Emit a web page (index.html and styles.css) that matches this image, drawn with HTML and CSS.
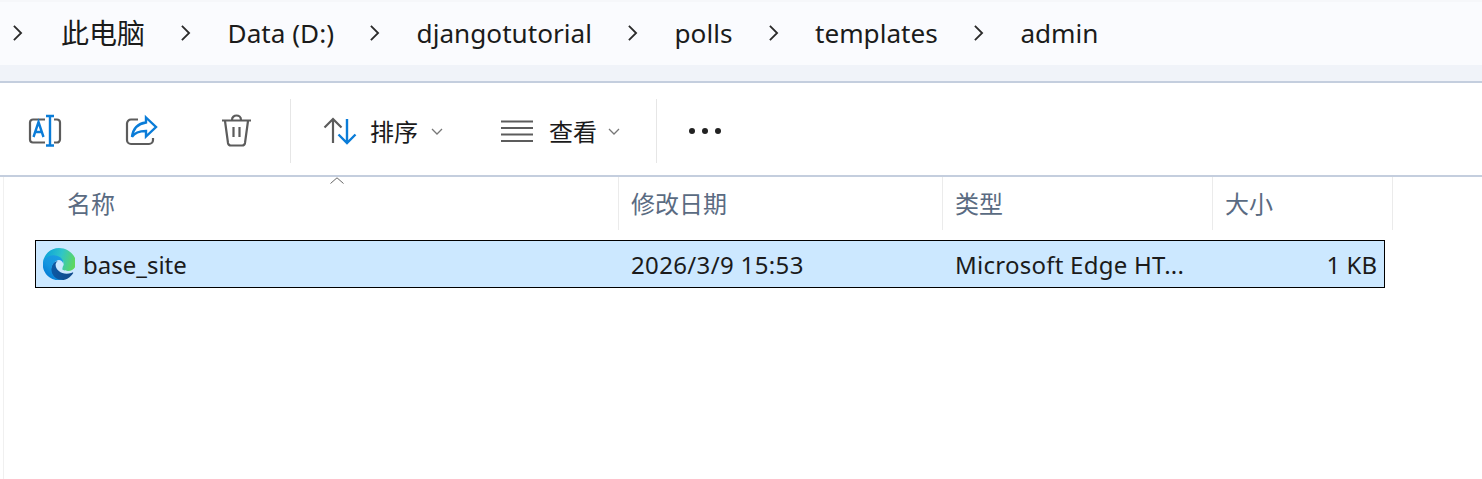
FILE: index.html
```html
<!DOCTYPE html>
<html lang="zh-CN">
<head>
  <meta charset="UTF-8" />
  <title>admin</title>
  <link rel="stylesheet" href="styles.css">
</head>
<body>
  <nav class="address-bar">
    <svg class="crumb-arrow" viewBox="0 0 12 20"><path d="M2 2l8 8-8 8"/></svg>
    <span class="crumb crumb-cn">此电脑</span>
    <svg class="crumb-arrow" viewBox="0 0 12 20"><path d="M2 2l8 8-8 8"/></svg>
    <span class="crumb">Data (D:)</span>
    <svg class="crumb-arrow" viewBox="0 0 12 20"><path d="M2 2l8 8-8 8"/></svg>
    <span class="crumb">djangotutorial</span>
    <svg class="crumb-arrow" viewBox="0 0 12 20"><path d="M2 2l8 8-8 8"/></svg>
    <span class="crumb">polls</span>
    <svg class="crumb-arrow" viewBox="0 0 12 20"><path d="M2 2l8 8-8 8"/></svg>
    <span class="crumb">templates</span>
    <svg class="crumb-arrow" viewBox="0 0 12 20"><path d="M2 2l8 8-8 8"/></svg>
    <span class="crumb">admin</span>
  </nav>
  <div class="bar-strip"></div>

  <div class="toolbar">
    <div class="tool-group">
      <svg class="icon" viewBox="0 0 32 32" fill="none">
        <path class="grey" d="M16 4.500H4a3 3 0 0 0-3 3v17a3 3 0 0 0 3 3h12M25 4.500h3a3 3 0 0 1 3 3v17a3 3 0 0 1-3 3h-3"/>
        <path class="blue" d="M21 1v29M17 1h8M17 30.500h8M4.500 22l5-15 5 15M6.300 17h6.400"/>
      </svg>
      <svg class="icon" viewBox="0 0 32 32" fill="none">
        <path class="grey" d="M13 4.500H6A4 4 0 0 0 2 8.500v16.500a4 4 0 0 0 4 4h18a4 4 0 0 0 4-4v-2"/>
        <path class="blue" d="M21 2.500L31 12l-10 9.500v-5.500c-6 0-11 1-14 6 1-8 6-13.500 14-14.500z"/>
      </svg>
      <svg class="icon" viewBox="0 0 32 32" fill="none">
        <path class="grey" d="M1 5.500h29M11 5c0-6 9-6 9 0M4 6l3 22a3 3 0 0 0 3 2.500h11a3 3 0 0 0 3-2.500l3-22M12.500 12v10M18.500 12v10"/>
      </svg>
    </div>
    <div class="tool-sep"></div>
    <div class="tool-menu">
      <svg class="icon" viewBox="0 0 32 32" fill="none">
        <path class="grey" d="M9 4v24M0.500 12.500L9 4l8.500 8.500"/>
        <path class="blue" d="M23 4v24M14.500 19.500L23 28l8.500-8.500"/>
      </svg>
      <span class="tool-label">排序</span>
      <svg class="menu-caret" viewBox="0 0 12 7"><path d="M1 1l5 5 5-5"/></svg>
    </div>
    <div class="tool-menu">
      <svg class="icon" viewBox="0 0 32 32" fill="none">
        <path class="grey" d="M0 6.500h32M0 13h32M0 19.500h32M0 26h32"/>
      </svg>
      <span class="tool-label">查看</span>
      <svg class="menu-caret" viewBox="0 0 12 7"><path d="M1 1l5 5 5-5"/></svg>
    </div>
    <div class="tool-sep tool-sep-2"></div>
    <div class="more-dots"><i></i><i></i><i></i></div>
  </div>

  <main class="file-pane">
    <svg class="sort-mark" viewBox="0 0 14 7"><path d="M0.500 6.500L7 0.800l6.500 5.700"/></svg>
    <div class="col-head">
      <div class="head-cell head-name">名称</div>
      <div class="head-cell">修改日期</div>
      <div class="head-cell">类型</div>
      <div class="head-cell">大小</div>
    </div>
    <div class="file-row">
      <div class="file-name">
        <svg class="edge" viewBox="0 0 256 256">
          <defs>
            <linearGradient id="e1" x1="63" y1="180" x2="241" y2="180" gradientUnits="userSpaceOnUse">
              <stop offset="0" stop-color="#0c59a4"/><stop offset="1" stop-color="#114a8b"/>
            </linearGradient>
            <linearGradient id="e2" x1="152" y1="100" x2="41" y2="222" gradientUnits="userSpaceOnUse">
              <stop offset="0" stop-color="#1b9de2"/><stop offset="0.6" stop-color="#1595df"/><stop offset="1" stop-color="#0680d7"/>
            </linearGradient>
            <linearGradient id="e3" x1="20" y1="60" x2="250" y2="130" gradientUnits="userSpaceOnUse">
              <stop offset="0" stop-color="#0fa5d8"/><stop offset="0.5" stop-color="#30c5c8"/><stop offset="1" stop-color="#5fd85c"/>
            </linearGradient>
          </defs>
          <path fill="url(#e1)" d="M235.680 195.460a93.730 93.730 0 0 1-10.540 4.710 101.870 101.870 0 0 1-35.900 6.460c-47.320 0-88.540-32.550-88.540-74.320A31.480 31.480 0 0 1 117.130 105c-42.800 1.800-53.800 46.400-53.800 72.530 0 73.880 68.090 81.370 82.760 81.370 7.910 0 19.840-2.300 27-4.560l1.310-.44a128.340 128.340 0 0 0 66.600-52.800 4 4 0 0 0-5.320-5.640z"/>
          <path fill="url(#e2)" d="M105.730 241.420A79.200 79.200 0 0 1 83 220.100a80.720 80.720 0 0 1 29.530-120c3.200-1.510 8.670-4.240 15.950-4.110a33.190 33.190 0 0 1 26.350 13.340 32.690 32.690 0 0 1 6.550 19.130c0-.21 25.080-81.610-82-81.610-45 0-82 42.700-82 80.170a133.430 133.430 0 0 0 12.410 57.400 128.140 128.140 0 0 0 156.600 67.150 75.550 75.550 0 0 1-60.660-10.150z"/>
          <path fill="url(#e3)" d="M156.940 161.410c-.83 1.080-3.380 2.570-3.380 5.850 0 2.710 1.760 5.310 4.890 7.500 14.900 10.360 43 9 43.070 9a61.720 61.720 0 0 0 31.370-8.650 63.460 63.460 0 0 0 31.490-54.680c.27-23.210-8.290-38.640-11.750-45.480C230.690 31.550 183.890 0 128 0A128 128 0 0 0 0 126.200c.27-37.460 37.740-67.750 82.530-67.750 3.630 0 24.330.35 43.560 10.440 16.950 8.900 25.830 19.650 32 30.320 6.410 11.070 7.550 25.050 7.550 30.620s-2.840 13.820-8.700 21.580z"/>
        </svg>
        <span>base_site</span>
      </div>
      <div class="file-cell file-date">2026/3/9 15:53</div>
      <div class="file-cell file-type">Microsoft Edge HT...</div>
      <div class="file-cell file-size">1 KB</div>
    </div>
  </main>
</body>
</html>
```

FILE: styles.css
```css
* {
  box-sizing: border-box;
}

html, body {
  height: 100%;
}

body {
  margin: 0;
  overflow: hidden;
  background: #fff;
  color: #1b1b1b;
  font-family: "Noto Sans", "Noto Sans CJK SC", sans-serif;
}

.address-bar {
  display: flex;
  align-items: center;
  height: 65px;
  padding-left: 12px;
  padding-bottom: 2px;
  background: #fafbfe;
  border-top: 2px solid #f6f7fa;
}

.crumb {
  font-size: 26.150px;
  line-height: 36px;
  white-space: nowrap;
}

.crumb-cn {
  font-size: 28px;
}

.crumb-arrow {
  width: 11px;
  height: 18px;
  margin: 0 36.400px 0 35.200px;
  flex: none;
}

.crumb-arrow:first-child {
  margin: 0 38px 0 0;
}

.crumb-arrow path {
  fill: none;
  stroke: #2a2a2a;
  stroke-width: 2;
}

.bar-strip {
  height: 16px;
  background: #f0f3f9;
}

.toolbar {
  display: flex;
  align-items: center;
  height: 96px;
  padding-top: 4px;
  padding-left: 29px;
  border-top: 2px solid #c4cede;
  border-bottom: 2px solid #c4cede;
}

.tool-group {
  display: flex;
  gap: 64px;
}

.icon {
  width: 32px;
  height: 32px;
  flex: none;
  overflow: visible;
}

.grey {
  stroke: #5c5c5c;
  stroke-width: 2.200;
}

.blue {
  stroke: #0a7cd8;
  stroke-width: 2.400;
}

.tool-sep {
  width: 1px;
  height: 64px;
  margin: 0 33px 0 37px;
  background: #e6e6e6;
}

.tool-sep-2 {
  margin: 0 32px 0 36px;
}

.tool-menu {
  display: flex;
  align-items: center;
}

.tool-menu + .tool-menu {
  margin-left: 58px;
}

.tool-label {
  margin-left: 14px;
  padding-top: 2px;
  font-size: 24px;
  line-height: 32px;
  white-space: nowrap;
}

.tool-menu + .tool-menu .tool-label {
  margin-left: 16px;
}

.menu-caret {
  width: 12px;
  height: 7px;
  margin-left: 13px;
}

.tool-menu + .tool-menu .menu-caret {
  margin-left: 11px;
}

.menu-caret path {
  fill: none;
  stroke: #777;
  stroke-width: 1.300;
}

.more-dots {
  display: flex;
  gap: 7px;
}

.more-dots i {
  width: 6px;
  height: 6px;
  border-radius: 50%;
  background: #222;
}

.file-pane {
  position: relative;
  height: 302px;
  margin-left: 3px;
  border-left: 1px solid #f0f0f0;
}

.sort-mark {
  position: absolute;
  left: 326px;
  top: 0;
  width: 14px;
  height: 7px;
}

.sort-mark path {
  fill: none;
  stroke: #666;
  stroke-width: 1;
}

.col-head {
  display: grid;
  grid-template-columns: 615px 324px 270px 180px;
  height: 51px;
}

.head-cell {
  padding-left: 12px;
  border-right: 1px solid #ebebeb;
  color: #5a6b82;
  font-size: 24px;
  line-height: 53px;
  white-space: nowrap;
}

.head-name {
  padding-left: 63px;
}

.file-row {
  display: grid;
  grid-template-columns: 583px 324px 270px 171px;
  align-items: center;
  height: 48px;
  margin: 12px 0 0 31px;
  width: 1350px;
  background: #cce8ff;
  border: 1px solid #000;
  font-size: 24px;
}

.file-name {
  display: flex;
  align-items: center;
  gap: 8px;
  padding-left: 7px;
}

.edge {
  width: 32px;
  height: 32px;
  flex: none;
}

.file-cell {
  padding-left: 12px;
  white-space: nowrap;
}

.file-date {
  letter-spacing: 0.350px;
}

.file-type {
  letter-spacing: 0.250px;
}

.file-size {
  padding: 0 7px 0 0;
  text-align: right;
}
```
